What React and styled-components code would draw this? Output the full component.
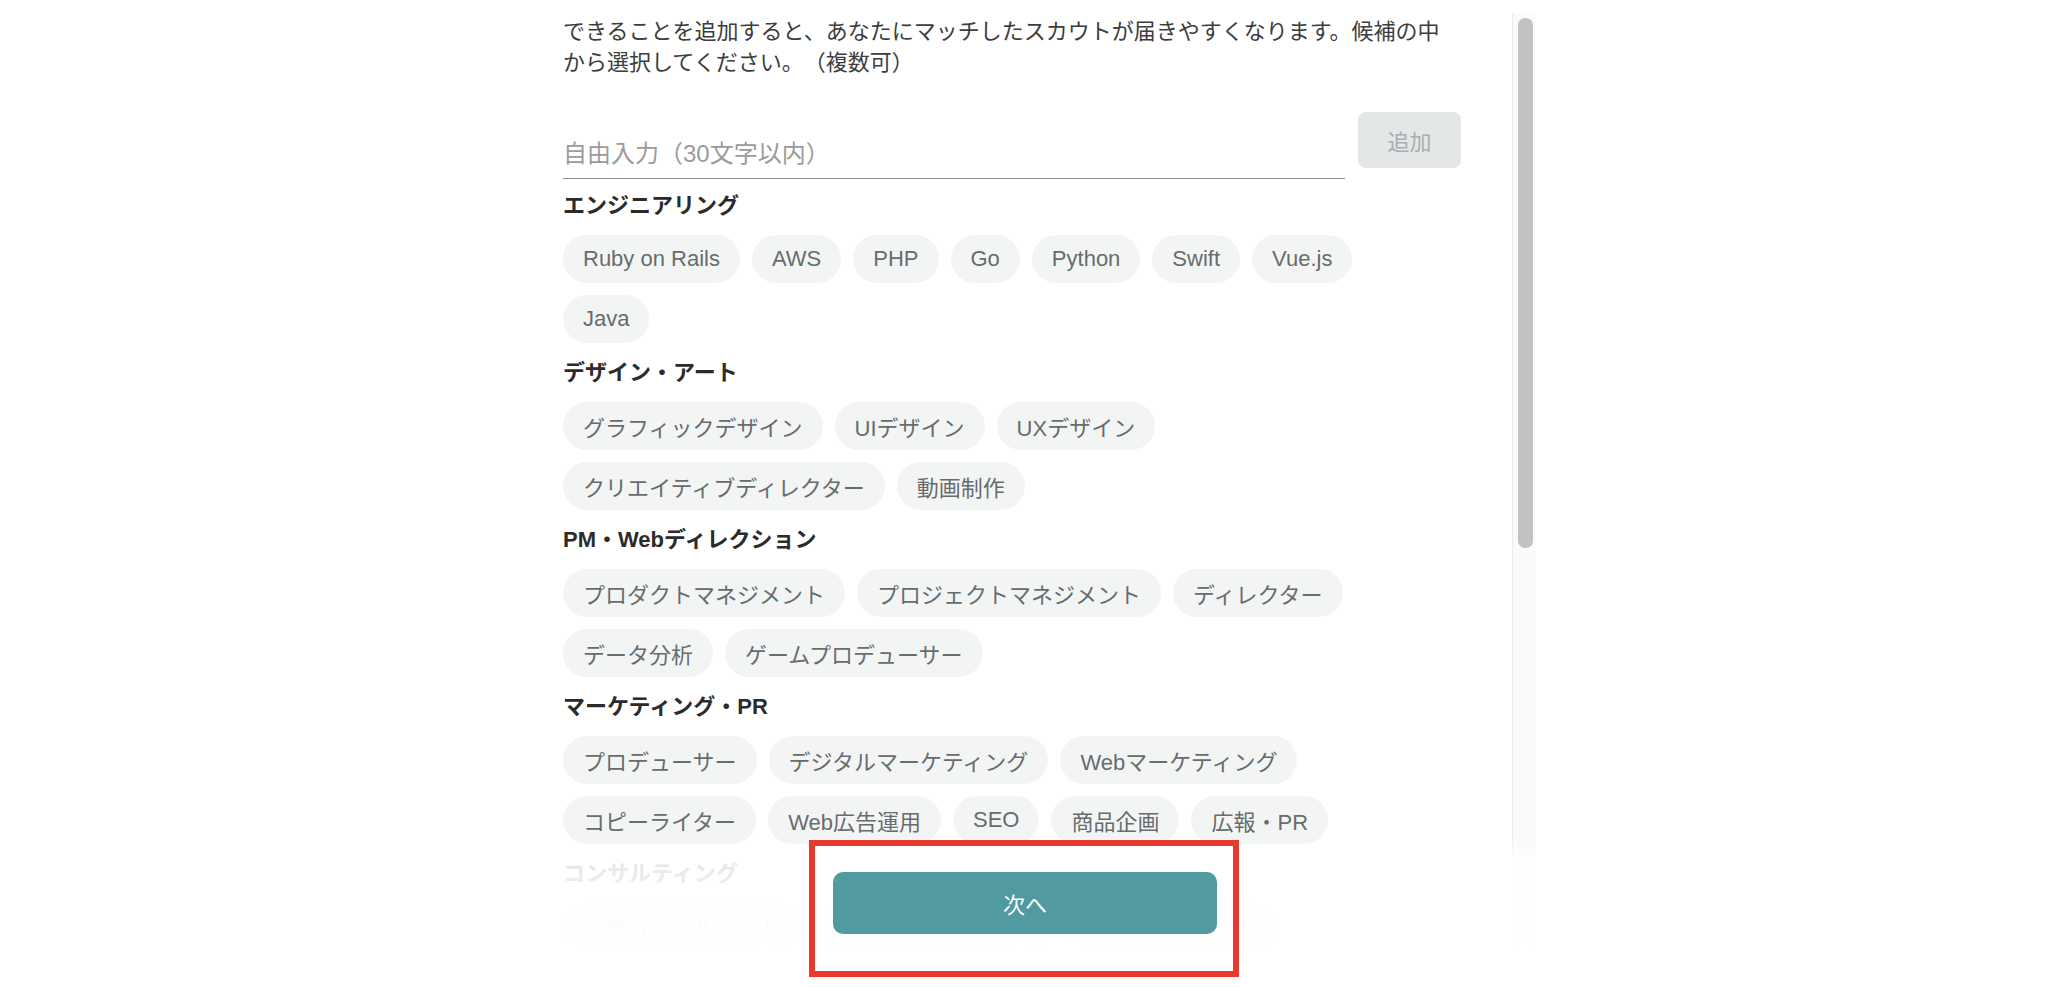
import React from 'react';
import styled, { createGlobalStyle } from 'styled-components';

const GlobalStyle = createGlobalStyle`
  html, body {
    margin: 0;
    padding: 0;
    background: #ffffff;
  }
  body {
    font-family: "Liberation Sans", "Noto Sans CJK JP", sans-serif;
    color: #333;
    text-spacing-trim: space-all;
  }
  input, input::placeholder {
    text-spacing-trim: space-all;
  }
`;

const Page = styled.div`
  display: flex;
  justify-content: center;
  width: 100%;
  height: 987px;
  overflow: hidden;
`;

const Panel = styled.div`
  position: relative;
  width: 1024px;
  height: 987px;
  display: flex;
  overflow: hidden;
`;

const Content = styled.div`
  width: 1000px;
  box-sizing: border-box;
  padding: 16px 51px 0;
  display: flex;
  flex-direction: column;
`;

const Lead = styled.p`
  margin: 0;
  font-size: 22px;
  line-height: 31px;
  color: #3d3d3d;
`;

const InputRow = styled.div`
  display: flex;
  align-items: flex-start;
  gap: 13px;
  margin-top: 34px;
`;

const FreeInput = styled.input`
  flex: 1;
  height: 67px;
  box-sizing: border-box;
  padding: 26px 0 8px;
  border: none;
  border-bottom: 1.5px solid #8f8f8f;
  outline: none;
  background: transparent;
  font-family: "Liberation Sans", "Noto Sans CJK JP", sans-serif;
  font-size: 24px;
  color: #333;

  &::placeholder {
    color: #9b9b9b;
    text-spacing-trim: space-all;
  }
`;

const AddButton = styled.button`
  width: 103px;
  height: 56px;
  border: none;
  border-radius: 8px;
  background: #e4e7e7;
  color: #a9aeae;
  font-family: "Liberation Sans", "Noto Sans CJK JP", sans-serif;
  font-size: 22px;
  cursor: default;
`;

const Section = styled.section`
  margin-top: ${p => (p.first ? '12px' : '15px')};
`;

const Heading = styled.h3`
  margin: 0 0 14px;
  font-size: 22px;
  line-height: 30px;
  font-weight: bold;
  color: #2b2b2b;
`;

const ChipList = styled.div`
  display: flex;
  flex-wrap: wrap;
  gap: 12px;
  padding-right: 40px;
`;

const Chip = styled.span`
  display: inline-flex;
  align-items: center;
  height: 48px;
  padding: 0 20px;
  border-radius: 24px;
  background: #f3f5f5;
  color: #676c6d;
  font-size: 22px;
  white-space: nowrap;
`;

const ScrollTrack = styled.div`
  width: 24px;
  margin-top: 13px;
  box-sizing: border-box;
  border-left: 1px solid #ececec;
  background: #fafafa;
  padding: 5px 3px 0 5px;
`;

const ScrollThumb = styled.div`
  height: 530px;
  border-radius: 7px;
  background: #c2c2c2;
`;

const Footer = styled.div`
  position: absolute;
  left: 0;
  right: 0;
  bottom: 0;
  height: 147px;
  box-sizing: border-box;
  padding-bottom: 10px;
  display: flex;
  justify-content: center;
  align-items: flex-start;
  background: linear-gradient(
    to bottom,
    rgba(255, 255, 255, 0) 0px,
    rgba(255, 255, 255, 0.88) 20px,
    rgba(255, 255, 255, 0.97) 75px,
    #ffffff 110px
  );
`;

const Highlight = styled.div`
  border: 6px solid #e8392d;
  padding: 26px 16px 37px 18px;
`;

const NextButton = styled.button`
  display: block;
  width: 384px;
  height: 62px;
  border: none;
  border-radius: 10px;
  background: #509aa0;
  color: #ffffff;
  font-family: "Liberation Sans", "Noto Sans CJK JP", sans-serif;
  font-size: 22px;
  cursor: pointer;
`;

const categories = [
  {
    title: 'エンジニアリング',
    items: ['Ruby on Rails', 'AWS', 'PHP', 'Go', 'Python', 'Swift', 'Vue.js', 'Java'],
  },
  {
    title: 'デザイン・アート',
    items: ['グラフィックデザイン', 'UIデザイン', 'UXデザイン', 'クリエイティブディレクター', '動画制作'],
  },
  {
    title: 'PM・Webディレクション',
    items: ['プロダクトマネジメント', 'プロジェクトマネジメント', 'ディレクター', 'データ分析', 'ゲームプロデューサー'],
  },
  {
    title: 'マーケティング・PR',
    items: ['プロデューサー', 'デジタルマーケティング', 'Webマーケティング', 'コピーライター', 'Web広告運用', 'SEO', '商品企画', '広報・PR'],
  },
  {
    title: 'コンサルティング',
    items: ['戦略コンサルタント', '業務コンサルタント', 'ITコンサルタント'],
  },
];

export default function App() {
  return (
    <Page>
      <GlobalStyle />
      <Panel>
        <Content>
          <Lead>
            できることを追加すると、あなたにマッチしたスカウトが届きやすくなります。候補の中から選択してください。（複数可）
          </Lead>
          <InputRow>
            <FreeInput placeholder="自由入力（30文字以内）" />
            <AddButton>追加</AddButton>
          </InputRow>
          {categories.map((cat, i) => (
            <Section key={cat.title} first={i === 0}>
              <Heading>{cat.title}</Heading>
              <ChipList>
                {cat.items.map(item => (
                  <Chip key={item}>{item}</Chip>
                ))}
              </ChipList>
            </Section>
          ))}
        </Content>
        <ScrollTrack>
          <ScrollThumb />
        </ScrollTrack>
        <Footer>
          <Highlight>
            <NextButton>次へ</NextButton>
          </Highlight>
        </Footer>
      </Panel>
    </Page>
  );
}
